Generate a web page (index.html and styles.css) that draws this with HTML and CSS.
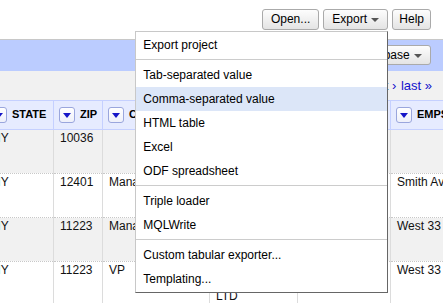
FILE: index.html
```html
<!DOCTYPE html>
<html lang="en">
<head>
    <meta charset="UTF-8">
    <meta name="viewport" content="width=device-width, initial-scale=1.0">
    <title>Export</title>
    <link rel="stylesheet" href="styles.css">
</head>
<body>
    <div class="toolbar">
        <button class="btn">Open...</button>
        <div class="export">
            <button class="btn">Export <span class="arrow"></span></button>
            <div class="menu">
                <div class="item">Export project</div>
                <div class="sep"></div>
                <div class="item">Tab-separated value</div>
                <div class="item active">Comma-separated value</div>
                <div class="item">HTML table</div>
                <div class="item">Excel</div>
                <div class="item">ODF spreadsheet</div>
                <div class="sep"></div>
                <div class="item">Triple loader</div>
                <div class="item">MQLWrite</div>
                <div class="sep"></div>
                <div class="item">Custom tabular exporter...</div>
                <div class="item">Templating...</div>
            </div>
        </div>
        <button class="btn help">Help</button>
    </div>

    <div class="panel">
        <button class="btn">Freebase <span class="arrow"></span></button>
    </div>

    <div class="pager">
        <a href="#">« first</a>
        <a href="#">‹ previous</a>
        <span>1 - 4</span>
        <a href="#">next ›</a>
        <a href="#">last »</a>
    </div>

    <table class="grid">
        <colgroup>
            <col class="c1">
            <col class="c2">
            <col class="c3">
            <col class="c4">
            <col class="c5">
            <col class="c6">
        </colgroup>
        <thead>
            <tr>
                <th><span class="drop"></span>STATE</th>
                <th><span class="drop"></span>ZIP</th>
                <th><span class="drop"></span>CONTACT TITLE</th>
                <th><span class="drop"></span>COMPANY</th>
                <th><span class="drop"></span>STREET</th>
                <th><span class="drop"></span>EMPS</th>
            </tr>
        </thead>
        <tbody>
            <tr class="odd first">
                <td>NY</td>
                <td>10036</td>
                <td></td>
                <td>TIMES SQUARE<br>REALTY<br>GROUP</td>
                <td></td>
                <td></td>
            </tr>
            <tr>
                <td>NY</td>
                <td>12401</td>
                <td>Manager</td>
                <td>HUDSON<br>VALLEY INC</td>
                <td>21</td>
                <td>Smith Ave</td>
            </tr>
            <tr class="odd">
                <td>NY</td>
                <td>11223</td>
                <td>Manager</td>
                <td>KINGS<br>HOLDING</td>
                <td>1440</td>
                <td>West 33 St</td>
            </tr>
            <tr>
                <td>NY</td>
                <td>11223</td>
                <td>VP</td>
                <td>KINGS<br>HOLDING<br>LTD</td>
                <td>1440</td>
                <td>West 33 St</td>
            </tr>
        </tbody>
    </table>
</body>
</html>
```

FILE: styles.css
```css
body{
    margin: 0;
    font-family: "Liberation Sans", Arial, sans-serif;
    font-size: 12px;
    color: #000;
    background-color: white;
    overflow: hidden;
}

/* top buttons */
.toolbar{
    display: flex;
    justify-content: flex-end;
    gap: 4px;
    padding: 9px 12px;
}
.btn{
    font: inherit;
    line-height: 13px;
    padding: 3px 8px;
    border: 1px solid #aaa;
    border-radius: 3px;
    background: linear-gradient(#fdfdfd, #e4e4e4);
    color: #000;
}
.btn.help{
    padding: 3px 6px;
}
.arrow{
    display: inline-block;
    margin-left: 1px;
    vertical-align: middle;
    border-left: 4px solid transparent;
    border-right: 4px solid transparent;
    border-top: 4px solid #555;
}
.export{
    position: relative;
}

/* dropdown */
.menu{
    position: absolute;
    top: 100%;
    right: 0;
    margin-top: 1px;
    width: 253px;
    box-sizing: border-box;
    padding: 1px 0;
    background-color: white;
    border: 1px solid;
    border-color: #c8c8c8 #666 #666 #c8c8c8;
    z-index: 10;
}
.item{
    height: 24px;
    line-height: 24px;
    padding: 0 7px;
    white-space: nowrap;
}
.item.active{
    background-color: #dce6f8;
}
.sep{
    height: 1px;
    margin: 2px 0 3px;
    background-color: #ccc;
}

/* view panel */
.panel{
    display: flex;
    justify-content: flex-end;
    padding: 5px 12px 6px;
    background-color: #bcf;
    border-top: 1px solid #c8c8c8;
}
.panel .btn{
    line-height: 12px;
}
.pager{
    height: 29px;
    line-height: 29px;
    padding-right: 11px;
    font-size: 13px;
    text-align: right;
    background-color: #f1f1f1;
    white-space: nowrap;
}
.pager a{
    color: #11c;
    text-decoration: none;
    margin-left: 1px;
}

/* data table */
.grid{
    border-collapse: collapse;
    table-layout: fixed;
    width: 524px;
    margin-left: -15px;
}
.c1{ width: 68px; }
.c2{ width: 49px; }
.c3{ width: 107px; }
.c4{ width: 88px; }
.c5{ width: 93px; }
.c6{ width: 119px; }
.grid th{
    height: 16px;
    padding: 6px 5px;
    text-align: left;
    font-size: 11px;
    white-space: nowrap;
    overflow: hidden;
    background-color: #e6ebff;
    border: 1px solid #c5d0ff;
}
.drop{
    display: inline-block;
    position: relative;
    width: 14px;
    height: 14px;
    margin-right: 5px;
    vertical-align: middle;
    border: 1px solid #9aa6dd;
    border-radius: 3px;
    background: linear-gradient(#fff, #eef0fa);
}
.drop::after{
    content: "";
    position: absolute;
    left: 3px;
    top: 5px;
    border-left: 4px solid transparent;
    border-right: 4px solid transparent;
    border-top: 5px solid #1616c8;
}
.grid td{
    height: 39px;
    padding: 2px 6px;
    vertical-align: top;
    line-height: 13px;
    color: #111;
    white-space: nowrap;
    overflow: hidden;
    border-left: 1px solid #dcdcdc;
    border-right: 1px solid #dcdcdc;
    border-bottom: 1px dotted #c8c8c8;
}
.grid .first td{
    height: 38px;
}
.grid .odd td{
    background-color: #f1f1f1;
}
```
